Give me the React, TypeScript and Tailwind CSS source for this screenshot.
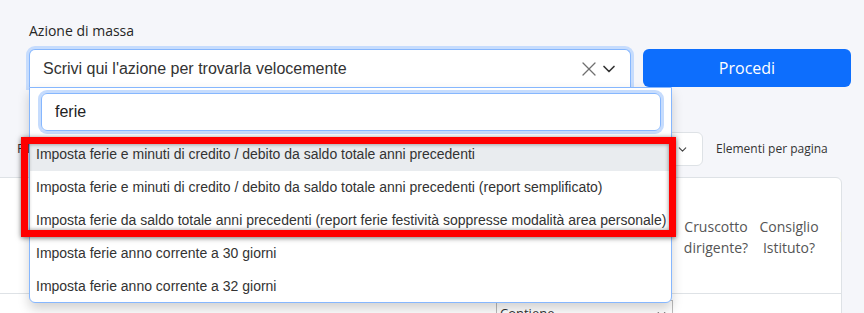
import { X, ChevronDown } from 'lucide-react'

const options = [
  'Imposta ferie e minuti di credito / debito da saldo totale anni precedenti',
  'Imposta ferie e minuti di credito / debito da saldo totale anni precedenti (report semplificato)',
  'Imposta ferie da saldo totale anni precedenti (report ferie festività soppresse modalità area personale)',
  'Imposta ferie anno corrente a 30 giorni',
  'Imposta ferie anno corrente a 32 giorni',
]

export default function App() {
  return (
    <div className="relative w-[864px] h-[313px] overflow-hidden bg-[#f5f6fa] font-['Open_Sans',sans-serif] text-[#333]">
      {/* mass action */}
      <div className="pl-[29px] pt-[21px]">
        <div className="text-[14px] leading-[20px] text-[#262626]">Azione di massa</div>
        <div className="mt-[8px] flex gap-[12px]">
          <div className="w-[602px] h-[38px] flex items-center pl-[13px] pr-[11px] bg-white border border-b-0 border-[#86b7fe] rounded-t-md shadow-[0_0_0_3px_#c6dcfd]">
            <span className="flex-1 font-['Liberation_Sans',Arial,sans-serif] text-[16px] text-[#333]">
              Scrivi qui l'azione per trovarla velocemente
            </span>
            <X size={24} strokeWidth={1.3} className="text-[#707070]" />
            <ChevronDown size={20} strokeWidth={2} className="-ml-[2px] text-[#333]" />
          </div>
          <button className="w-[208px] h-[38px] rounded-md bg-[#0d6efd] text-white text-[16px]">Procedi</button>
        </div>
      </div>

      {/* filters row */}
      <div className="mt-[45px] flex items-center h-[34px] pl-[17px]">
        <span className="w-[583px] text-[13px] text-[#333]">Filtra</span>
        <div className="w-[103px] h-[34px] flex items-center justify-end pr-[13px] bg-white border border-[#dee2e6] rounded-md">
          <ChevronDown size={13} strokeWidth={2} className="text-[#444]" />
        </div>
        <span className="ml-[13px] text-[12px] text-[#333]">Elementi per pagina</span>
      </div>

      {/* table card */}
      <div className="mt-[11px] -ml-[4px] w-[846px] h-[200px] bg-white border border-[#dee2e6] rounded-tr-md overflow-hidden">
        <div className="h-[116px] flex items-center pt-[2px] border-b border-[#dee2e6] text-[14px] leading-[21px] text-[#555] whitespace-nowrap">
          <div className="w-[681px] shrink-0" />
          <div className="w-[76px] shrink-0 text-center">
            Cruscotto
            <br />
            dirigente?
          </div>
          <div className="w-[70px] shrink-0 text-center">
            Consiglio
            <br />
            Istituto?
          </div>
          <div className="pl-[16px]">Inviato</div>
        </div>
        <div className="pt-[6px] pl-[499px]">
          <div className="w-[177px] h-[28px] flex items-center justify-between pl-[3px] pr-[4px] border border-[#bbb] text-[13px]">
            <span>Contiene</span>
            <ChevronDown size={13} strokeWidth={2.4} className="text-[#333]" />
          </div>
        </div>
      </div>

      {/* dropdown */}
      <div className="absolute left-[29px] top-[87px] w-[643px] h-[216px] bg-white border border-[#86b7fe] rounded-b-md shadow-[0_6px_12px_rgba(0,0,0,0.18)] font-['Liberation_Sans',Arial,sans-serif]">
        <div className="pl-[11px] pr-[10px] pt-[5px]">
          <div className="h-[38px] flex items-center pl-[13px] border border-[#86b7fe] rounded-md shadow-[0_0_0_3px_#c6dcfd] text-[16px] text-[#222]">
            ferie
          </div>
        </div>
        <div className="mt-[7px]">
          {options.map((o, i) => (
            <div
              key={o}
              className={`h-[33px] flex items-center pl-[6px] text-[14px] text-[#333] whitespace-nowrap ${i === 0 ? 'bg-[#e9ecef]' : ''}`}
            >
              {o}
            </div>
          ))}
        </div>
      </div>

      {/* annotation */}
      <div className="absolute left-[21px] top-[137px] w-[655px] h-[100px] border-[7px] border-[#ff0000] shadow-[0_1px_5px_rgba(0,0,0,0.55),inset_0_0_4px_rgba(0,0,0,0.45)]" />
    </div>
  )
}
